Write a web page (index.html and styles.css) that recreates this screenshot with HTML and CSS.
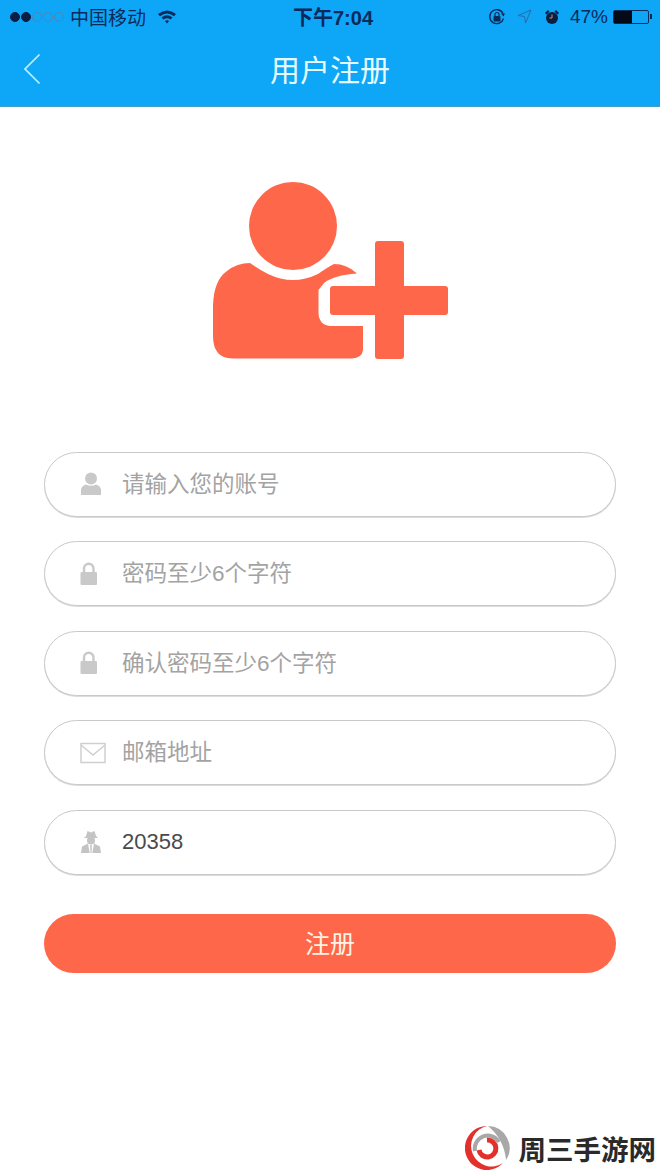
FILE: index.html
```html
<!DOCTYPE html>
<html lang="zh-CN">
<head>
    <meta charset="UTF-8">
    <meta name="viewport" content="width=device-width, initial-scale=1.0">
    <title>用户注册</title>
    <link rel="stylesheet" href="styles.css">
</head>
<body>
    <div id="page">
        <!-- Blue top area -->
        <header class="top-bar">
            <div class="status-bar">
                <div class="status-left">
                    <span class="signal"><i class="on"></i><i class="on"></i><i></i><i></i><i></i></span>
                    <span class="carrier">中国移动</span>
                    <svg class="wifi" width="20" height="15" viewBox="0 0 20 15">
                        <path d="M1 5 Q10 -2 19 5 L17 7.2 Q10 2 3 7.2Z M4.5 8.5 Q10 4 15.5 8.5 L13.5 10.6 Q10 8 6.500 10.600Z M8 12 Q10 10.500 12 12 L10 14.500Z" fill="#0b2a5c"/>
                    </svg>
                </div>
                <div class="status-time">下午7:04</div>
                <div class="status-right">
                    <svg width="18" height="18" viewBox="0 0 18 18">
                        <path d="M15.500 10.500 A7 7 0 1 1 15 5.500" fill="none" stroke="#0b2a5c" stroke-width="1.300"/>
                        <path d="M13 5.500 L17 5.500 L15.500 8.500Z" fill="#0b2a5c"/>
                        <rect x="5.500" y="8" width="7" height="5.500" rx="1" fill="#0b2a5c"/>
                        <path d="M7 8 V6.500 A2 2 0 0 1 11 6.500 V8" fill="none" stroke="#0b2a5c" stroke-width="1.200"/>
                    </svg>
                    <svg class="arrow" width="15" height="15" viewBox="0 0 15 15">
                        <path d="M14 1 L1 6.500 L7.500 7.500 L8.500 14Z" fill="none" stroke="#2a6aa8" stroke-width="1"/>
                    </svg>
                    <svg class="alarm" width="16" height="16" viewBox="0 0 16 16">
                        <circle cx="8" cy="9" r="6" fill="#0b1f45"/>
                        <path d="M1 4 L4 1 L5.500 2.500 L2.500 5.500Z M15 4 L12 1 L10.500 2.500 L13.500 5.500Z" fill="#0b1f45"/>
                        <path d="M8 5.500 V9 H5.500" fill="none" stroke="#e8913a" stroke-width="1"/>
                    </svg>
                    <span class="percent">47%</span>
                    <span class="battery"><span class="battery-level"></span></span><span class="battery-tip"></span>
                </div>
            </div>
            <div class="nav-bar">
                <svg class="back" width="18" height="32" viewBox="0 0 18 32">
                    <path d="M16.500 1.500 L2 16 L16.500 30.500" fill="none" stroke="#bdf0ff" stroke-width="1.700"/>
                </svg>
                <h1>用户注册</h1>
            </div>
        </header>

        <main class="content">
            <svg class="avatar" width="260" height="200" viewBox="0 0 260 200">
                <circle cx="93" cy="56" r="44" fill="#ff674a"/>
                <path d="M50 93 Q60 100 68 104 Q93 116 118 104 Q128 97 134 94 Q147 94 157 103.500 Q134 105 124 113 L118.500 120 V143 Q119 155 130 156 H163 V180 Q162 188 152 188.500 H32 Q13 188 13 166 V135 Q14 110 27 101 Q37 93 50 93Z" fill="#ff674a"/>
                <rect x="175" y="71" width="29" height="118" rx="3" fill="#ff674a"/>
                <rect x="130" y="116" width="118" height="29" rx="3" fill="#ff674a"/>
            </svg>

            <form class="reg-form">
                <div class="field">
                    <svg class="field-icon" width="22" height="24" viewBox="0 0 22 24">
                        <circle cx="11" cy="6.500" r="6" fill="#c9c9c9"/>
                        <path d="M1 23 V18 Q1 14 6 12.500 Q11 15 16 12.500 Q21 14 21 18 V23Z" fill="#c9c9c9"/>
                    </svg>
                    <span class="hint">请输入您的账号</span>
                </div>
                <div class="field">
                    <svg class="field-icon" width="18" height="24" viewBox="0 0 18 24">
                        <rect x="0.500" y="10" width="16.500" height="13" rx="1" fill="#c9c9c9"/>
                        <path d="M4 10 V6.500 A4.700 4.700 0 0 1 13.500 6.500 V10" fill="none" stroke="#c9c9c9" stroke-width="2.400"/>
                    </svg>
                    <span class="hint">密码至少6个字符</span>
                </div>
                <div class="field">
                    <svg class="field-icon" width="18" height="24" viewBox="0 0 18 24">
                        <rect x="0.500" y="10" width="16.500" height="13" rx="1" fill="#c9c9c9"/>
                        <path d="M4 10 V6.500 A4.700 4.700 0 0 1 13.500 6.500 V10" fill="none" stroke="#c9c9c9" stroke-width="2.400"/>
                    </svg>
                    <span class="hint">确认密码至少6个字符</span>
                </div>
                <div class="field">
                    <svg class="field-icon" width="26" height="22" viewBox="0 0 26 22">
                        <rect x="1" y="1.500" width="24" height="19" fill="none" stroke="#cfcfcf" stroke-width="1.500"/>
                        <path d="M1 3 L13 13 L25 3" fill="none" stroke="#cfcfcf" stroke-width="1.500"/>
                    </svg>
                    <span class="hint">邮箱地址</span>
                </div>
                <div class="field">
                    <svg class="field-icon" width="22" height="24" viewBox="0 0 22 24">
                        <path d="M6 6 L7.500 1 L11 2.500 L14.500 1 L16 6 L18 8 H4Z" fill="#c4c4c4"/>
                        <circle cx="11" cy="10.500" r="4" fill="#c4c4c4"/>
                        <path d="M1 23 L2 16.500 L8 13.500 L9.700 23Z M12.300 23 L14 13.500 L20 16.500 L21 23Z M10.200 15 H11.800 L11.600 23 H10.400Z" fill="#c4c4c4"/>
                    </svg>
                    <span class="value">20358</span>
                </div>
                <button type="button" class="submit-btn">注册</button>
            </form>
        </main>

        <!-- Watermark over the bottom corner -->
        <div class="watermark">
            <svg width="46" height="44" viewBox="2 0 46 44">
                <path d="M24 0 A22 22 0 1 0 40 37 A20.500 20.500 0 1 1 24 0Z" fill="#e2312d"/>
                <path d="M25 0 A22 22 0 0 1 43 34 A50 50 0 0 0 25 0Z" fill="#a8a8a8"/>
                <path d="M12 25 A13 13 0 0 1 36 16" fill="none" stroke="#a8a8a8" stroke-width="4"/>
                <path d="M24 14 A8.500 8.500 0 1 1 16 24" fill="none" stroke="#e2312d" stroke-width="5"/>
            </svg>
            <span class="watermark-text">周三手游网</span>
        </div>
    </div>
</body>
</html>
```

FILE: styles.css
```css
body {
    margin: 0;
    padding: 0;
    background-color: #fff;
    font-family: "Liberation Sans", "Noto Sans CJK SC", sans-serif;
}

#page {
    position: relative;
    width: 660px;
    height: 1174px;
    overflow: hidden;
}

.top-bar {
    height: 107px;
    box-sizing: border-box;
    background-color: #0ea6f6;
    border-bottom: 1px solid #3d9fc9;
}

.status-bar {
    display: flex;
    align-items: center;
    justify-content: space-between;
    height: 33px;
    padding: 0 8px 0 10px;
    color: #0b2a5c;
}

.status-left, .status-right {
    display: flex;
    align-items: center;
    width: 211px;
}

.status-right {
    justify-content: flex-end;
}

.signal {
    display: flex;
    gap: 1px;
}

.signal i {
    width: 10px;
    height: 10px;
    box-sizing: border-box;
    border: 1px solid #4f86b8;
    border-radius: 50%;
}

.signal i.on {
    background-color: #0b1f45;
    border-color: #0b1f45;
}

.carrier {
    margin-left: 6px;
    font-size: 19px;
}

.wifi {
    margin-left: 11px;
}

.status-time {
    margin-left: 4px;
    font-size: 20px;
    font-weight: bold;
}

.status-right .arrow {
    margin-left: 11px;
}

.status-right .alarm {
    margin-left: 12px;
}

.percent {
    margin-left: 10px;
    font-size: 19px;
}

.battery {
    display: block;
    width: 36px;
    height: 14px;
    margin-left: 5px;
    box-sizing: border-box;
    border: 1px solid #0b2a5c;
    border-radius: 2px;
}

.battery-level {
    display: block;
    width: 18px;
    height: 12px;
    background-color: #050a18;
}

.battery-tip {
    display: block;
    width: 2px;
    height: 5px;
    margin-left: 1px;
    background-color: #0b2a5c;
}

.nav-bar {
    display: flex;
    align-items: center;
    justify-content: center;
    position: relative;
    height: 73px;
}

.nav-bar h1 {
    margin: 0 0 4px;
    color: #e6fbff;
    font-size: 30px;
    font-weight: normal;
}

.back {
    position: absolute;
    left: 23px;
    top: 20px;
}

.content {
    padding: 63px 44px 0;
}

.avatar {
    display: block;
    margin-left: 156px;
}

.reg-form {
    display: flex;
    flex-direction: column;
    gap: 24.500px;
    margin-top: 81.500px;
}

.field {
    display: grid;
    grid-template-columns: 42px 1fr;
    align-items: center;
    height: 65px;
    box-sizing: border-box;
    padding-left: 35px;
    background-color: #fff;
    border: 1px solid #c9c9c9;
    border-radius: 33px;
    box-shadow: 0 1px 0 #dcdcdc;
}

.hint {
    margin-bottom: 5px;
    color: #a3a3a3;
    font-size: 22.500px;
}

.value {
    color: #4a4a4a;
    font-size: 22px;
}

.submit-btn {
    height: 59px;
    margin-top: 15px;
    padding: 0 0 3px;
    background-color: #ff674a;
    color: #fff3e6;
    border: none;
    border-radius: 30px;
    font-family: inherit;
    font-size: 25px;
}

.watermark {
    position: absolute;
    right: 4px;
    bottom: 4px;
    display: flex;
    align-items: center;
    gap: 8px;
}

.watermark-text {
    color: #2a2a2a;
    font-size: 27.500px;
    font-weight: bold;
}
```
